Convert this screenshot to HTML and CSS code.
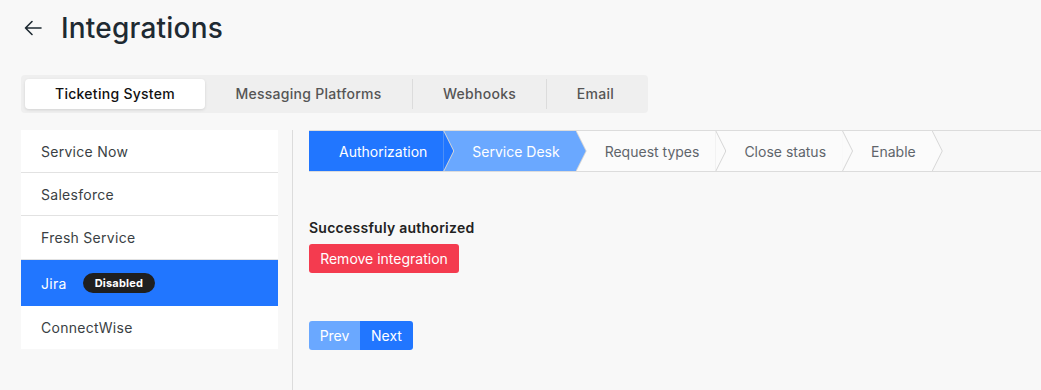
FILE: index.html
```html
<!DOCTYPE html>
<html lang="en">
<head>
    <meta charset="UTF-8">
    <meta name="viewport" content="width=device-width, initial-scale=1.0">
    <title>Integrations</title>
    <link rel="stylesheet" href="styles.css">
</head>
<body>
    <div class="page">
        <header class="page-head">
            <svg class="back" width="20" height="20" viewBox="0 0 20 20" fill="none" stroke="#1e2a32" stroke-width="1.6" stroke-linecap="round" stroke-linejoin="round">
                <path d="M18 10H2.5M9 3.5L2.5 10L9 16.5"/>
            </svg>
            <h1>Integrations</h1>
        </header>

        <div class="tabs">
            <div class="tab active">Ticketing System</div>
            <div class="tab tab-wide">Messaging Platforms</div>
            <div class="tab tab-mid sep">Webhooks</div>
            <div class="tab tab-small sep">Email</div>
        </div>

        <div class="layout">
            <ul class="providers">
                <li>Service Now</li>
                <li>Salesforce</li>
                <li>Fresh Service</li>
                <li class="active">Jira <span class="badge">Disabled</span></li>
                <li>ConnectWise</li>
            </ul>

            <section class="panel">
                <div class="steps">
                    <div class="step done">Authorization</div>
                    <div class="step current">Service Desk</div>
                    <div class="step">Request types</div>
                    <div class="step">Close status</div>
                    <div class="step">Enable</div>
                </div>

                <div class="panel-body">
                    <div class="status">Successfuly authorized</div>
                    <button class="btn-danger">Remove integration</button>

                    <div class="pager">
                        <button class="prev">Prev</button>
                        <button class="next">Next</button>
                    </div>
                </div>
            </section>
        </div>
    </div>
</body>
</html>
```

FILE: styles.css
```css
body {
    margin: 0;
    background-color: #f8f8f8;
    font-family: Inter, "Noto Sans", sans-serif;
    color: #333;
}
.page {
    padding-left: 21px;
}
.page-head {
    display: flex;
    align-items: center;
    height: 36px;
    padding-top: 10px;
}
.back {
    margin-left: 2px;
    margin-right: 18px;
}
h1 {
    margin: 0;
    font-size: 28px;
    font-weight: 500;
    line-height: 34px;
    letter-spacing: 0.2px;
    color: #1e2a32;
}

/* top tabs */
.tabs {
    display: flex;
    width: 619px;
    margin-top: 29px;
    padding: 4px;
    background-color: #efefef;
    border-radius: 4px;
}
.tab {
    width: 180px;
    height: 30px;
    line-height: 30px;
    text-align: center;
    font-size: 14px;
    font-weight: 500;
    letter-spacing: 0.28px;
    color: #555;
    box-sizing: border-box;
}
.tab.active {
    background-color: #fff;
    color: #111;
    border-radius: 4px;
    box-shadow: 0 1px 3px rgba(0, 0, 0, 0.12);
}
.tab-wide { width: 207px; }
.tab-mid { width: 134px; }
.tab-small { width: 98px; }
.tab.sep {
    border-left: 1px solid #dcdcdc;
}

.layout {
    display: flex;
    margin-top: 17px;
}

/* provider list */
.providers {
    list-style: none;
    margin: 0;
    padding: 0;
    width: 257px;
    background-color: #fff;
    align-self: flex-start;
}
.providers li {
    display: flex;
    align-items: center;
    height: 42px;
    padding-left: 20px;
    font-size: 14px;
    letter-spacing: 0.28px;
    color: #3a3f44;
    border-bottom: 1px solid #e2e2e2;
}
.providers li:nth-child(3) {
    height: 43px;
}
.providers li.active {
    height: 46px;
    background-color: #2176ff;
    color: #fff;
    border-bottom: none;
}
.providers li:last-child {
    height: 43px;
    border-bottom: none;
}
.badge {
    margin-left: 16px;
    padding: 0 12px;
    height: 20px;
    line-height: 20px;
    border-radius: 10px;
    background-color: #1f1f1f;
    color: #fff;
    font-size: 11px;
    font-weight: 700;
    letter-spacing: 0.2px;
}

/* right panel */
.panel {
    flex: 1;
    margin-left: 14px;
    padding-left: 16px;
    border-left: 1px solid #dcdcdc;
    height: 260px;
    overflow: hidden;
}
.steps {
    display: flex;
    height: 40px;
    border-top: 1px solid #dcdcdc;
    border-bottom: 1px solid #dcdcdc;
}
.step {
    position: relative;
    display: flex;
    align-items: center;
    padding: 0 16px 0 29px;
    background-color: #fbfbfb;
    font-size: 14px;
    color: #5f656b;
}
.step:first-child {
    padding-left: 30px;
}
.step::before,
.step::after {
    content: "";
    position: absolute;
    top: 0;
    height: 100%;
}
.step::before {
    right: -11px;
    width: 11px;
    background-color: #d6d6d6;
    clip-path: polygon(0 0, 1px 0, 100% 50%, 1px 100%, 0 100%);
    z-index: 1;
}
.step::after {
    right: -10px;
    width: 10px;
    background: inherit;
    clip-path: polygon(0 0, 100% 50%, 0 100%);
    z-index: 2;
}
.step.done {
    background-color: #2176ff;
    color: #fff;
}
.step.current {
    background-color: #6aa8ff;
    color: #fff;
}

.panel-body {
    padding-top: 46px;
}
.status {
    font-size: 14px;
    font-weight: 600;
    line-height: 20px;
    letter-spacing: 0.25px;
    color: #222;
}
button {
    font-family: Inter, "Noto Sans", sans-serif;
    font-size: 14px;
    border: none;
    color: #fff;
    cursor: pointer;
    height: 29px;
}
.btn-danger {
    display: block;
    margin-top: 6px;
    width: 150px;
    background-color: #f43b4f;
    border-radius: 3px;
}
.pager {
    display: flex;
    margin-top: 48px;
}
.prev {
    width: 51px;
    background-color: #6aa8ff;
    border-radius: 3px 0 0 3px;
}
.next {
    width: 53px;
    background-color: #2176ff;
    border-radius: 0 3px 3px 0;
}
```
